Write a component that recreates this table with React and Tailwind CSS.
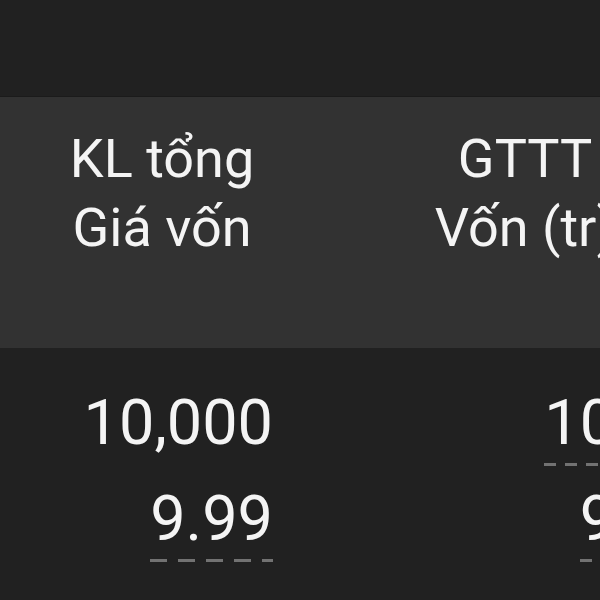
import React from "react";

const dashA =
  "bg-[repeating-linear-gradient(to_right,#727272_0_17px,transparent_17px_28px)]";
const dashB =
  "bg-[repeating-linear-gradient(to_right,#727272_0_12px,transparent_12px_21px)]";

const Cell = ({ value, dashed, dash, first }) => (
  <div className={first ? "" : "mt-[18px]"}>
    <div className="leading-[70px]">{value}</div>
    <div className={`mt-[5px] h-[3px] ${dashed ? dash : ""}`} />
  </div>
);

const App = () => {
  return (
    <div
      className="w-[600px] h-[600px] overflow-hidden flex flex-col bg-[#212121] text-[#f4f4f4]"
      style={{ fontFamily: "Roboto, 'Noto Sans', sans-serif" }}
    >
      {/* top bar */}
      <div className="h-[97px] shrink-0 bg-[#212121] border-b border-[#1b1b1b]" />

      {/* header */}
      <div className="h-[251px] shrink-0 bg-[#323232] flex text-[54px] leading-[69px]">
        <div className="w-[324px] shrink-0 pt-[27px] text-center">
          <div>KL tổng</div>
          <div>Giá vốn</div>
        </div>
        <div className="w-[420px] shrink-0 pt-[27px] pr-[18px] text-center whitespace-nowrap">
          <div>GTTT</div>
          <div>Vốn (tr)</div>
        </div>
      </div>

      {/* body */}
      <div className="flex-1 flex text-[63px]">
        <div className="w-[324px] shrink-0 pt-[40px] pr-[51px] flex flex-col items-end">
          <Cell value="10,000" first dash={dashA} />
          <Cell value="9.99" dashed dash={dashA} />
        </div>
        <div className="w-[420px] shrink-0 pt-[40px] pr-[6px] flex flex-col items-end">
          <Cell value="100.00" first dashed dash={dashB} />
          <Cell value="99.90" dashed dash={dashB} />
        </div>
      </div>
    </div>
  );
};

export default App;
